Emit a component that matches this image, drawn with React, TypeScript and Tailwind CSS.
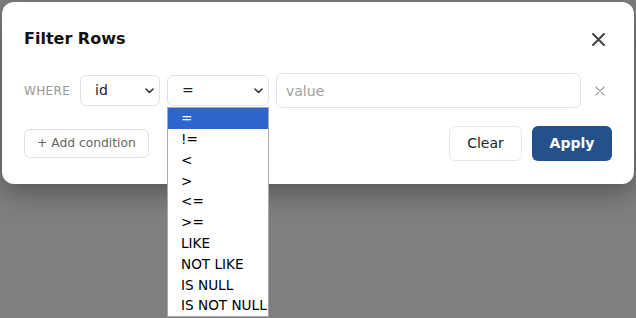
import { useState } from "react";

/* -------------------------------------------------------------------------- */
/*  Constants                                                                 */
/* -------------------------------------------------------------------------- */

const OPERATORS = ["=", "!=", "<", ">", "<=", ">=", "LIKE", "NOT LIKE", "IS NULL", "IS NOT NULL"];

const FONT = { fontFamily: '"DejaVu Sans", Verdana, sans-serif' };

/* -------------------------------------------------------------------------- */
/*  Icons                                                                     */
/* -------------------------------------------------------------------------- */

function Chevron() {
  return (
    <svg width="9" height="6" viewBox="0 0 9 6" fill="none" className="shrink-0">
      <path d="M1 1l3.5 3.5L8 1" stroke="#333" strokeWidth="1.6" strokeLinecap="round" strokeLinejoin="round" />
    </svg>
  );
}

function Cross({ size, color, width }: { size: number; color: string; width: number }) {
  return (
    <svg width={size} height={size} viewBox="0 0 12 12" fill="none">
      <path d="M1 1l10 10M11 1L1 11" stroke={color} strokeWidth={width} strokeLinecap="round" />
    </svg>
  );
}

/* -------------------------------------------------------------------------- */
/*  Select (closed box + optional open list)                                  */
/* -------------------------------------------------------------------------- */

function SelectBox({
  value,
  width,
  open,
  options,
}: {
  value: string;
  width: string;
  open?: boolean;
  options?: string[];
}) {
  return (
    <div className={`relative ${width}`}>
      <div className="flex h-[31px] items-center justify-between rounded-md border border-[#e2e2e2] bg-white pl-[14px] pr-[5px] text-[14px] text-[#222]">
        <span>{value}</span>
        <Chevron />
      </div>
      {open && options && (
        <ul className="absolute left-0 top-[32px] z-10 w-full border border-[#a8a8a8] bg-white text-[13.6px] text-black">
          {options.map((op) => (
            <li
              key={op}
              className={`flex h-[20.8px] items-center whitespace-nowrap pl-[13px] ${
                op === value ? "bg-[#2f65ca] text-white" : ""
              }`}
            >
              {op}
            </li>
          ))}
        </ul>
      )}
    </div>
  );
}

/* -------------------------------------------------------------------------- */
/*  Dialog                                                                    */
/* -------------------------------------------------------------------------- */

export default function App() {
  const [value, setValue] = useState("");

  return (
    <div className="h-[318px] w-[636px] overflow-hidden bg-[#7f7f7f] p-[2px]" style={FONT}>
      <div className="h-[182px] w-[632px] rounded-[12px] bg-white px-[22px] pt-[26px] shadow-[0_8px_28px_rgba(0,0,0,0.35)]">
        {/* Header */}
        <div className="flex h-[22px] items-center justify-between">
          <h2 className="text-[16px] font-bold text-[#111]">Filter Rows</h2>
          <button type="button" className="flex h-[22px] w-[28px] items-center justify-center">
            <Cross size={13} color="#444" width={1.9} />
          </button>
        </div>

        {/* Condition row */}
        <div className="mt-[23px] flex h-[35px] items-center">
          <span className="w-[56px] text-[12px] tracking-[0.03em] text-[#999]">WHERE</span>
          <SelectBox value="id" width="w-[80px]" />
          <div className="w-[7px]" />
          <SelectBox value="=" width="w-[102px]" open options={OPERATORS} />
          <input
            value={value}
            onChange={(e) => setValue(e.target.value)}
            placeholder="value"
            className="ml-[7px] h-[35px] flex-1 rounded-md border border-[#e4e4e4] px-[9px] text-[14px] text-[#222] outline-none placeholder:text-[#a0a0a0]"
          />
          <button type="button" className="flex h-[35px] w-[31px] items-center justify-center pl-[7px]">
            <Cross size={10} color="#999" width={1.4} />
          </button>
        </div>

        {/* Footer */}
        <div className="mt-[18px] flex items-start justify-between">
          <button
            type="button"
            className="mt-[3px] h-[29px] rounded-md border border-[#e2e2e2] px-3 text-[12.3px] text-[#666]"
          >
            + Add condition
          </button>
          <div className="flex gap-[10px]">
            <button
              type="button"
              className="h-[35px] w-[73px] rounded-md border border-[#e8e8e8] text-[14px] text-[#222]"
            >
              Clear
            </button>
            <button
              type="button"
              className="h-[35px] w-[80px] rounded-md bg-[#24508b] text-[14px] font-bold text-white"
            >
              Apply
            </button>
          </div>
        </div>
      </div>
    </div>
  );
}
